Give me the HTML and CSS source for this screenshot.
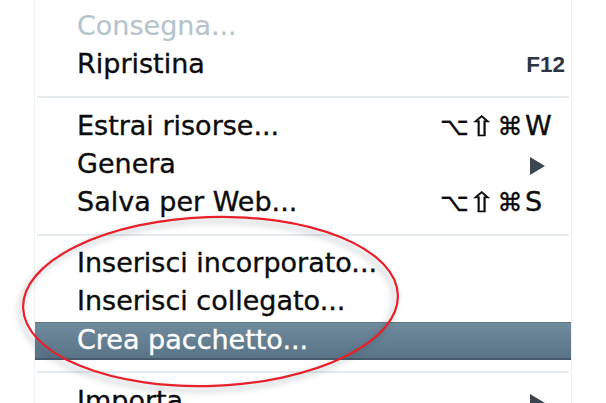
FILE: index.html
```html
<!DOCTYPE html>
<html lang="it">
<head>
<meta charset="utf-8">
<title>Menu</title>
<link rel="stylesheet" href="styles.css">
</head>
<body>
<div class="menu">
  <div class="item disabled"><span class="label">Consegna...</span></div>
  <div class="item"><span class="label">Ripristina</span><span class="key fkey">F12</span></div>
  <div class="sep"></div>
  <div class="item"><span class="label">Estrai risorse...</span><span class="key combo"><span class="g opt">⌥</span><span class="g shift"><span class="sg">⇧</span></span><span class="g cmd">⌘</span><span>W</span></span></div>
  <div class="item"><span class="label">Genera</span><span class="arrow"></span></div>
  <div class="item"><span class="label">Salva per Web...</span><span class="key combo"><span class="g opt">⌥</span><span class="g shift"><span class="sg">⇧</span></span><span class="g cmd">⌘</span><span>S</span></span></div>
  <div class="sep narrow"></div>
  <div class="item"><span class="label">Inserisci incorporato...</span></div>
  <div class="item"><span class="label">Inserisci collegato...</span></div>
  <div class="item selected"><span class="label">Crea pacchetto...</span></div>
  <div class="sep"></div>
  <div class="item"><span class="label">Importa</span><span class="arrow"></span></div>
</div>
<svg class="circle" width="606" height="403" viewBox="0 0 606 403">
  <ellipse cx="210.5" cy="301.5" rx="187.5" ry="84.5" transform="rotate(-2 210.5 301.5)" fill="none" stroke="#e8202a" stroke-width="2.2"/>
</svg>
</body>
</html>
```
FILE: styles.css
```css
html, body {
  margin: 0;
  padding: 0;
  background: #ffffff;
  overflow: hidden;
  width: 606px;
  height: 403px;
}
body {
  position: relative;
  font-family: "DejaVu Sans", "Liberation Sans", sans-serif;
}
.menu {
  margin-left: 34px;
  width: 536px;
  padding-top: 9px;
  border-left: 1px solid #edf1f3;
  border-right: 1px solid #edf1f3;
  height: 394px;
}
.item {
  display: flex;
  align-items: center;
  height: 38px;
  padding-left: 42px;
  font-size: 27px;
  color: #0c0c0c;
  -webkit-text-stroke: 0.35px currentColor;
}
.item .label {
  flex: 1;
  line-height: 38px;
  position: relative;
  top: -2px;
  white-space: nowrap;
}
.disabled { color: #b5c4cc; -webkit-text-stroke: 0.2px currentColor; }
.selected {
  color: #ffffff;
  background: linear-gradient(#708b9d, #5a7487);
  border-top: 1px solid #5d7586;
  border-bottom: 2px solid #465b6b;
  height: 35px;
}
.selected .label { top: -1px; }
.sep {
  height: 24px;
  display: flex;
  align-items: center;
  padding-left: 2px;
}
.sep.narrow { height: 23px; }
.sep::before {
  content: "";
  display: block;
  flex: 1;
  height: 2px;
  margin-right: 2px;
  background: #e4eaee;
}
.key {
  width: 125px;
  padding-right: 6px;
  line-height: 38px;
}
.fkey {
  text-align: right;
  font-family: "Liberation Sans", Arial, sans-serif;
  font-size: 22.5px;
  font-weight: bold;
  color: #2c3640;
  -webkit-text-stroke: 0;
  position: relative;
  top: -1px;
}
.combo {
  display: flex;
  align-items: baseline;
  position: relative;
  top: -2px;
}
.g {
  display: inline-block;
  font-size: 25px;
}
.opt {
  width: 27px;
  text-align: left;
}
.shift {
  width: 28px;
  text-align: center;
}
.sg {
  display: inline-block;
  transform: scale(1.3, 1.1);
}
.cmd {
  width: 30px;
  text-align: center;
  font-size: 25px;
}
.arrow {
  width: 0;
  height: 0;
  border-top: 9px solid transparent;
  border-bottom: 9px solid transparent;
  border-left: 15px solid #3b4650;
  margin-right: 26px;
}
.circle {
  position: absolute;
  left: 0;
  top: 0;
  filter: drop-shadow(-3px 4px 3px rgba(40, 50, 60, 0.38));
}
```
